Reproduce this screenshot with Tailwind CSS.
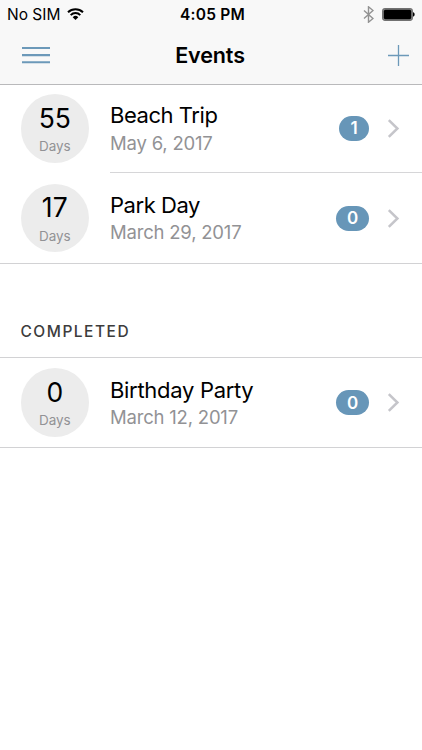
<!DOCTYPE html>
<html lang="en">
<head>
<meta charset="utf-8">
<title>Events</title>
<script src="https://cdn.jsdelivr.net/npm/@tailwindcss/browser@4"></script>
</head>
<body class="bg-white text-black font-['Inter','Liberation_Sans',sans-serif] w-[422px] h-[750px] overflow-hidden">
<header class="h-[85px] bg-[#f8f8f8] border-b border-[#b9b9bb]">
  <div class="h-7 grid grid-cols-3 items-center px-[7px]">
    <div class="flex items-center gap-[7px]">
      <span class="text-[15.5px] leading-7 whitespace-nowrap">No SIM</span>
      <svg class="w-[17px] h-[12px] -mt-px" viewBox="0 0 17 12" fill="none" stroke="#000" stroke-width="2"><path d="M1 4.3a10.8 10.8 0 0 1 15 0M3.7 7.1a6.8 6.8 0 0 1 9.6 0"/><path d="M8.5 12 5.7 9.2a4 4 0 0 1 5.6 0z" fill="#000" stroke="none"/></svg>
    </div>
    <div class="pl-[3px] pt-px text-center text-[15.5px] leading-7 font-semibold tracking-[0.2px] whitespace-nowrap"><span>4:05 PM</span></div>
    <div class="flex items-center justify-end gap-[8px]">
      <svg class="w-[11px] h-[17px]" viewBox="0 0 11 17" fill="none" stroke="#929292" stroke-width="1.4"><path d="M1 4.5l9 8-4.5 3.7V.8L10 4.5l-9 8"/></svg>
      <svg class="w-[33px] h-[13px]" viewBox="0 0 33 13"><rect x=".6" y=".6" width="29.8" height="11.8" rx="2.6" fill="#888" stroke="#707070" stroke-width="1.1"/><rect x="1.8" y="1.8" width="27.4" height="9.4" rx="1.6"/><path d="M31 4.3c2.2.6 2.2 3.8 0 4.4z"/></svg>
    </div>
  </div>
  <div class="h-[55px] grid grid-cols-3 items-center px-3">
    <svg class="ml-[10px] w-7 h-[17px]" viewBox="0 0 28 17" fill="#6c99b9"><path d="M0 0h28v2.1H0zM0 7.1h28v2.1H0zM0 14.2h28v2.1H0z"/></svg>
    <h1 class="pr-[2px] text-center text-[21.5px] leading-7 font-semibold tracking-[-0.1px] -mt-px">Events</h1>
    <svg class="w-[21px] h-[21px] justify-self-end mr-px" viewBox="0 0 21 21" stroke="#6c99b9" stroke-width="1.3"><path d="M0 10.5h21M10.5 0v21"/></svg>
  </div>
</header>
<main>
  <section>
    <div class="h-[88px] flex pl-[20.5px]">
      <div class="mt-[9px] w-[68.5px] h-[68.5px] rounded-full bg-[#ececec] flex flex-col items-center shrink-0">
        <span class="mt-[9px] text-[26.5px] leading-[30px]">55</span>
        <span class="mt-[4px] text-[13.5px] leading-[18px] tracking-[-0.1px] text-[#929295]">Days</span>
      </div>
      <div class="ml-[21px] flex-1 flex border-b border-[#d6d6d8]">
        <div class="flex-1 pt-[16px] whitespace-nowrap">
          <div class="text-[22px] leading-[28px] tracking-[-0.45px]">Beach Trip</div>
          <div class="text-[18.5px] leading-[27px] pt-px tracking-[-0.2px] text-[#929295]">May 6, 2017</div>
        </div>
        <div class="mt-[31px] w-[30px] h-[25px] rounded-full bg-[#6796b8] text-white text-[17px] leading-[25px] font-semibold text-center">1</div>
        <svg class="mt-[34px] ml-[18px] mr-[22px] w-[13px] h-[19px]" viewBox="0 0 13 19" fill="none" stroke="#c5c5ca" stroke-width="2.5"><path d="M1.8 1.2 10.4 9.5 1.8 17.8"/></svg>
      </div>
    </div>
    <div class="h-[91px] flex pl-[20.5px] border-b border-[#d2d2d4]">
      <div class="mt-[10.5px] w-[68.5px] h-[68.5px] rounded-full bg-[#ececec] flex flex-col items-center shrink-0">
        <span class="mt-[8.5px] text-[26.5px] leading-[30px]">17</span>
        <span class="mt-[5px] text-[13.5px] leading-[18px] tracking-[-0.1px] text-[#929295]">Days</span>
      </div>
      <div class="ml-[21px] flex-1 flex">
        <div class="flex-1 pt-[18px] whitespace-nowrap">
          <div class="text-[22px] leading-[28px] tracking-[-0.45px]">Park Day</div>
          <div class="text-[18.5px] leading-[27px] tracking-[-0.2px] text-[#929295]">March 29, 2017</div>
        </div>
        <div class="mt-[32.5px] w-[33px] h-[25px] rounded-full bg-[#6796b8] text-white text-[17px] leading-[25px] font-semibold text-center">0</div>
        <svg class="mt-[35.5px] ml-[18px] mr-[22px] w-[13px] h-[19px]" viewBox="0 0 13 19" fill="none" stroke="#c5c5ca" stroke-width="2.5"><path d="M1.8 1.2 10.4 9.5 1.8 17.8"/></svg>
      </div>
    </div>
  </section>
  <section>
    <h2 class="h-[94px] pt-[58px] pl-[20.5px] text-[15.5px] leading-[20px] font-medium tracking-[1.5px] text-[#3c3c3c] border-b border-[#d2d2d4]"><span>COMPLETED</span></h2>
    <div class="h-[90px] flex pl-[20.5px] border-b border-[#d2d2d4]">
      <div class="mt-[10px] w-[68.5px] h-[68.5px] rounded-full bg-[#ececec] flex flex-col items-center shrink-0">
        <span class="mt-[9px] text-[26.5px] leading-[30px]">0</span>
        <span class="mt-[4px] text-[13.5px] leading-[18px] tracking-[-0.1px] text-[#929295]">Days</span>
      </div>
      <div class="ml-[21px] flex-1 flex">
        <div class="flex-1 pt-[18px] whitespace-nowrap">
          <div class="text-[22px] leading-[28px] tracking-[-0.3px]">Birthday Party</div>
          <div class="text-[18.5px] leading-[27px] tracking-[-0.2px] text-[#929295]">March 12, 2017</div>
        </div>
        <div class="mt-[32px] w-[33px] h-[25px] rounded-full bg-[#6796b8] text-white text-[17px] leading-[26px] font-semibold text-center">0</div>
        <svg class="mt-[35px] ml-[18px] mr-[22px] w-[13px] h-[19px]" viewBox="0 0 13 19" fill="none" stroke="#c5c5ca" stroke-width="2.5"><path d="M1.8 1.2 10.4 9.5 1.8 17.8"/></svg>
      </div>
    </div>
  </section>
</main>
</body>
</html>
